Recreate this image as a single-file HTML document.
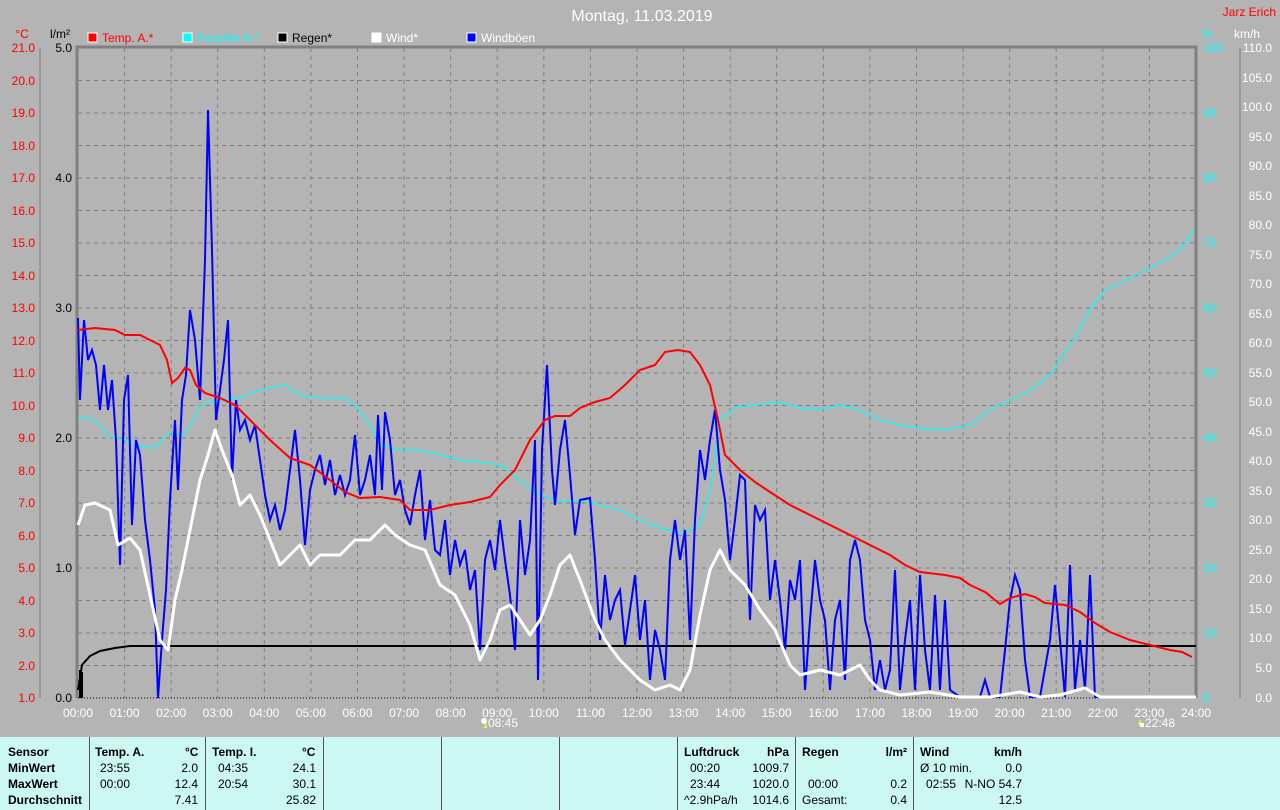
<!DOCTYPE html>
<html><head><meta charset="utf-8"><style>
body{margin:0;background:#b4b4b4;width:1280px;height:810px;overflow:hidden;font-family:"Liberation Sans",sans-serif}
svg{position:absolute;left:0;top:0}
.tb{position:absolute;left:0;top:737px;width:1280px;height:73px;background:#ccf8f4}
.c{position:absolute;font-size:12px;color:#000;white-space:nowrap}
.b{font-weight:bold}
.d{position:absolute;top:737px;width:1px;height:73px;background:#555}
</style></head><body>
<svg width="1280" height="737" viewBox="0 0 1280 737" font-family="Liberation Sans, sans-serif">
<text x="642" y="21" fill="#fff" font-size="16" text-anchor="middle">Montag, 11.03.2019</text>
<text x="1276" y="16" fill="#f00" font-size="12" text-anchor="end">Jarz Erich</text>
<text x="22" y="38" fill="#f00" font-size="12" text-anchor="middle">°C</text>
<text x="50" y="38" fill="#000" font-size="12">l/m²</text>
<text x="1202" y="38" fill="#0ff" font-size="12">%</text>
<text x="1234" y="38" fill="#fff" font-size="12">km/h</text>
<g font-size="12">
<rect x="88" y="33" width="9" height="9" fill="#f00" stroke="#fff"/><text x="102" y="42" fill="#f00">Temp. A.*</text>
<rect x="183" y="33" width="9" height="9" fill="#0ff" stroke="#fff"/><text x="197" y="42" fill="#0ff">Feuchte A.*</text>
<rect x="278" y="33" width="9" height="9" fill="#000" stroke="#fff"/><text x="292" y="42" fill="#000">Regen*</text>
<rect x="372" y="33" width="9" height="9" fill="#fff" stroke="#fff"/><text x="386" y="42" fill="#fff">Wind*</text>
<rect x="467" y="33" width="9" height="9" fill="#00f" stroke="#fff"/><text x="481" y="42" fill="#fff">Windböen</text>
</g>
<g stroke="#808080" stroke-dasharray="4,4" stroke-width="1">
<path d="M124.6 48V698M171.2 48V698M217.7 48V698M264.3 48V698M310.9 48V698M357.5 48V698M404.1 48V698M450.7 48V698M497.2 48V698M543.8 48V698M590.4 48V698M637 48V698M683.6 48V698M730.2 48V698M776.7 48V698M823.3 48V698M869.9 48V698M916.5 48V698M963.1 48V698M1009.7 48V698M1056.2 48V698M1102.8 48V698M1149.4 48V698"/>
<path d="M78 80.5H1196M78 113H1196M78 145.5H1196M78 178H1196M78 210.5H1196M78 243H1196M78 275.5H1196M78 308H1196M78 340.5H1196M78 373H1196M78 405.5H1196M78 438H1196M78 470.5H1196M78 503H1196M78 535.5H1196M78 568H1196M78 600.5H1196M78 633H1196M78 665.5H1196"/>
</g>
<path d="M77 698V47H1196V698" fill="none" stroke="#808080" stroke-width="3"/>
<path d="M78 698H1196" stroke="#000" stroke-dasharray="1,2"/>
<path d="M40 48V698M1240 48V698" stroke="#808080"/>
<g fill="#f00" font-size="12" text-anchor="end">
<text x="35" y="52">21.0</text><text x="35" y="85">20.0</text><text x="35" y="117">19.0</text><text x="35" y="150">18.0</text><text x="35" y="182">17.0</text><text x="35" y="215">16.0</text><text x="35" y="247">15.0</text><text x="35" y="280">14.0</text><text x="35" y="312">13.0</text><text x="35" y="345">12.0</text><text x="35" y="377">11.0</text><text x="35" y="410">10.0</text><text x="35" y="442">9.0</text><text x="35" y="475">8.0</text><text x="35" y="507">7.0</text><text x="35" y="540">6.0</text><text x="35" y="572">5.0</text><text x="35" y="605">4.0</text><text x="35" y="637">3.0</text><text x="35" y="670">2.0</text><text x="35" y="702">1.0</text>
</g>
<g fill="#000" font-size="12" text-anchor="end">
<text x="72" y="52">5.0</text><text x="72" y="182">4.0</text><text x="72" y="312">3.0</text><text x="72" y="442">2.0</text><text x="72" y="572">1.0</text><text x="72" y="702">0.0</text>
</g>
<g fill="#0ff" font-size="12">
<text x="1203" y="52">100</text><text x="1203" y="117">90</text><text x="1203" y="182">80</text><text x="1203" y="247">70</text><text x="1203" y="312">60</text><text x="1203" y="377">50</text><text x="1203" y="442">40</text><text x="1203" y="507">30</text><text x="1203" y="572">20</text><text x="1203" y="637">10</text><text x="1203" y="702">0</text>
</g>
<g fill="#fff" font-size="12" text-anchor="end">
<text x="1272" y="52">110.0</text><text x="1272" y="82">105.0</text><text x="1272" y="111">100.0</text><text x="1272" y="141">95.0</text><text x="1272" y="170">90.0</text><text x="1272" y="200">85.0</text><text x="1272" y="229">80.0</text><text x="1272" y="259">75.0</text><text x="1272" y="288">70.0</text><text x="1272" y="318">65.0</text><text x="1272" y="347">60.0</text><text x="1272" y="377">55.0</text><text x="1272" y="406">50.0</text><text x="1272" y="436">45.0</text><text x="1272" y="465">40.0</text><text x="1272" y="495">35.0</text><text x="1272" y="524">30.0</text><text x="1272" y="554">25.0</text><text x="1272" y="583">20.0</text><text x="1272" y="613">15.0</text><text x="1272" y="642">10.0</text><text x="1272" y="672">5.0</text><text x="1272" y="702">0.0</text>
</g>
<g fill="#fff" font-size="12" text-anchor="middle">
<text x="78" y="717">00:00</text><text x="124.6" y="717">01:00</text><text x="171.2" y="717">02:00</text><text x="217.7" y="717">03:00</text><text x="264.3" y="717">04:00</text><text x="310.9" y="717">05:00</text><text x="357.5" y="717">06:00</text><text x="404.1" y="717">07:00</text><text x="450.7" y="717">08:00</text><text x="497.2" y="717">09:00</text><text x="543.8" y="717">10:00</text><text x="590.4" y="717">11:00</text><text x="637" y="717">12:00</text><text x="683.6" y="717">13:00</text><text x="730.2" y="717">14:00</text><text x="776.7" y="717">15:00</text><text x="823.3" y="717">16:00</text><text x="869.9" y="717">17:00</text><text x="916.5" y="717">18:00</text><text x="963.1" y="717">19:00</text><text x="1009.7" y="717">20:00</text><text x="1056.2" y="717">21:00</text><text x="1102.8" y="717">22:00</text><text x="1149.4" y="717">23:00</text><text x="1196" y="717">24:00</text>
<text x="503" y="727">08:45</text><text x="1160" y="727">22:48</text>
</g>
<circle cx="484" cy="721" r="3" fill="#fff"/><path d="M486 722l-2 6h3z" fill="#ff0"/>
<path d="M1140 719l2 6h-4z" fill="#ff0"/><rect x="1140" y="723" width="4" height="4" fill="#fff"/>
<path d="M80 670V698M82 672V698" stroke="#000" stroke-width="2"/>
<polyline fill="none" stroke="#000" stroke-width="2" points="78,690 82,665 90,656 100,651 115,648 130,646 1196,646"/>
<polyline fill="none" stroke="#0ff" stroke-width="1.2" points="78,418 90,418 100,425 110,437 125,440 140,447 155,448 170,432 185,435 200,405 220,400 240,398 260,390 285,385 300,395 320,398 345,398 355,405 370,425 380,445 400,450 420,450 440,455 460,460 480,462 500,465 520,480 540,495 560,502 580,500 600,505 620,510 640,520 660,528 680,533 700,525 710,490 720,420 735,408 755,405 780,402 800,408 820,410 840,405 860,410 880,420 900,425 920,428 945,430 970,425 990,410 1010,400 1030,390 1050,375 1070,345 1090,310 1105,290 1120,283 1140,273 1160,263 1180,250 1194,230"/>
<polyline fill="none" stroke="#00f" stroke-width="2" points="78,318 80,400 84,320 88,360 92,350 96,365 100,410 104,365 108,410 112,380 116,440 120,565 124,400 128,375 132,525 136,440 140,455 145,520 150,560 155,610 158,698 162,640 166,590 170,500 175,420 178,490 182,400 186,375 190,310 195,340 200,400 205,260 208,110 212,250 216,420 220,390 224,360 228,320 232,480 236,400 240,430 245,420 250,440 255,425 260,460 265,495 270,520 275,505 280,530 285,510 290,470 295,430 300,480 305,545 310,490 315,470 320,455 325,485 330,460 335,495 340,475 345,495 350,480 355,435 360,495 365,480 370,455 375,495 378,415 382,490 385,412 390,440 395,495 400,480 405,510 410,525 415,495 420,470 425,540 430,500 435,550 440,555 445,520 450,575 455,540 460,565 465,550 470,590 475,570 480,650 485,560 490,540 495,570 500,520 505,560 510,595 515,650 520,520 525,575 530,540 535,440 538,680 542,450 547,365 552,470 555,505 560,450 565,420 570,475 575,535 580,500 590,498 595,560 600,640 605,575 610,620 615,600 620,590 625,645 630,610 635,575 640,640 645,600 650,680 655,630 660,650 665,680 670,560 675,520 680,560 685,530 690,640 695,520 700,450 705,480 710,440 715,410 720,470 725,500 730,560 735,520 740,475 745,480 750,620 755,505 760,520 765,510 770,600 775,560 780,600 785,650 790,580 795,600 800,560 805,690 810,620 815,560 820,600 825,620 830,690 835,620 840,600 845,680 850,560 855,540 860,560 865,620 870,640 875,690 880,660 885,690 890,670 895,570 900,690 905,640 910,600 915,690 920,575 925,650 930,690 935,595 940,690 945,600 950,690 960,697 980,697 985,680 990,697 1000,697 1005,650 1010,600 1015,575 1020,590 1025,660 1030,697 1040,697 1050,640 1055,585 1060,640 1065,697 1070,565 1075,690 1080,640 1085,690 1090,575 1095,697 1196,697"/>
<polyline fill="none" stroke="#fff" stroke-width="3" stroke-linejoin="round" points="78,525 85,505 95,503 110,510 118,545 130,538 140,550 150,595 160,640 168,650 175,600 182,570 190,530 200,480 208,455 215,430 222,450 232,475 240,505 250,495 260,515 270,540 280,565 290,555 300,545 310,565 320,555 340,555 355,540 370,540 385,525 395,535 410,545 425,550 440,585 455,595 470,625 480,660 490,640 500,610 510,605 520,620 530,635 540,620 550,595 560,565 570,555 580,580 595,620 605,640 620,660 640,680 655,690 670,685 680,690 690,670 700,615 710,570 720,550 730,570 745,585 760,610 775,630 790,665 800,675 820,670 840,675 860,665 870,680 880,690 900,695 930,692 960,697 990,697 1020,692 1040,697 1060,695 1085,688 1100,697 1196,697"/>
<polyline fill="none" stroke="#f00" stroke-width="2" points="78,330 95,328 115,330 125,335 140,335 150,340 160,345 167,360 172,383 178,378 185,368 190,370 196,385 205,393 220,398 235,405 250,420 270,440 290,458 310,465 330,480 345,492 360,498 380,497 400,500 410,510 430,510 450,505 470,502 490,497 500,485 515,470 530,440 545,420 555,416 570,416 580,408 595,402 610,398 625,385 640,370 655,365 665,352 678,350 690,352 700,365 710,385 718,420 725,455 740,470 755,482 770,492 790,505 810,515 830,525 850,535 870,545 890,555 905,565 920,572 945,575 960,578 970,585 985,592 1000,604 1010,598 1025,594 1035,597 1045,603 1065,605 1080,612 1095,623 1110,632 1130,640 1150,645 1170,650 1182,652 1192,657"/>
</svg>
<div class="tb"></div>
<div class="d" style="left:89px"></div><div class="d" style="left:205px"></div><div class="d" style="left:323px"></div><div class="d" style="left:441px"></div><div class="d" style="left:559px"></div><div class="d" style="left:677px"></div><div class="d" style="left:795px"></div><div class="d" style="left:913px"></div>
<div class="c b" style="left:8px;top:745px">Sensor</div>
<div class="c b" style="left:8px;top:761px">MinWert</div>
<div class="c b" style="left:8px;top:777px">MaxWert</div>
<div class="c b" style="left:8px;top:793px">Durchschnitt</div>
<div class="c b" style="left:95px;top:745px">Temp. A.</div><div class="c b" style="left:185px;top:745px">°C</div>
<div class="c" style="left:100px;top:761px">23:55</div><div class="c" style="right:1082px;top:761px">2.0</div>
<div class="c" style="left:100px;top:777px">00:00</div><div class="c" style="right:1082px;top:777px">12.4</div>
<div class="c" style="right:1082px;top:793px">7.41</div>
<div class="c b" style="left:212px;top:745px">Temp. I.</div><div class="c b" style="left:302px;top:745px">°C</div>
<div class="c" style="left:218px;top:761px">04:35</div><div class="c" style="right:964px;top:761px">24.1</div>
<div class="c" style="left:218px;top:777px">20:54</div><div class="c" style="right:964px;top:777px">30.1</div>
<div class="c" style="right:964px;top:793px">25.82</div>
<div class="c b" style="left:684px;top:745px">Luftdruck</div><div class="c b" style="right:491px;top:745px">hPa</div>
<div class="c" style="left:690px;top:761px">00:20</div><div class="c" style="right:491px;top:761px">1009.7</div>
<div class="c" style="left:690px;top:777px">23:44</div><div class="c" style="right:491px;top:777px">1020.0</div>
<div class="c" style="left:684px;top:793px">^2.9hPa/h</div><div class="c" style="right:491px;top:793px">1014.6</div>
<div class="c b" style="left:802px;top:745px">Regen</div><div class="c b" style="right:373px;top:745px">l/m²</div>
<div class="c" style="left:808px;top:777px">00:00</div><div class="c" style="right:373px;top:777px">0.2</div>
<div class="c" style="left:802px;top:793px">Gesamt:</div><div class="c" style="right:373px;top:793px">0.4</div>
<div class="c b" style="left:920px;top:745px">Wind</div><div class="c b" style="right:258px;top:745px">km/h</div>
<div class="c" style="left:920px;top:761px">Ø 10 min.</div><div class="c" style="right:258px;top:761px">0.0</div>
<div class="c" style="left:926px;top:777px">02:55</div><div class="c" style="right:258px;top:777px">N-NO 54.7</div>
<div class="c" style="right:258px;top:793px">12.5</div>
</body></html>
